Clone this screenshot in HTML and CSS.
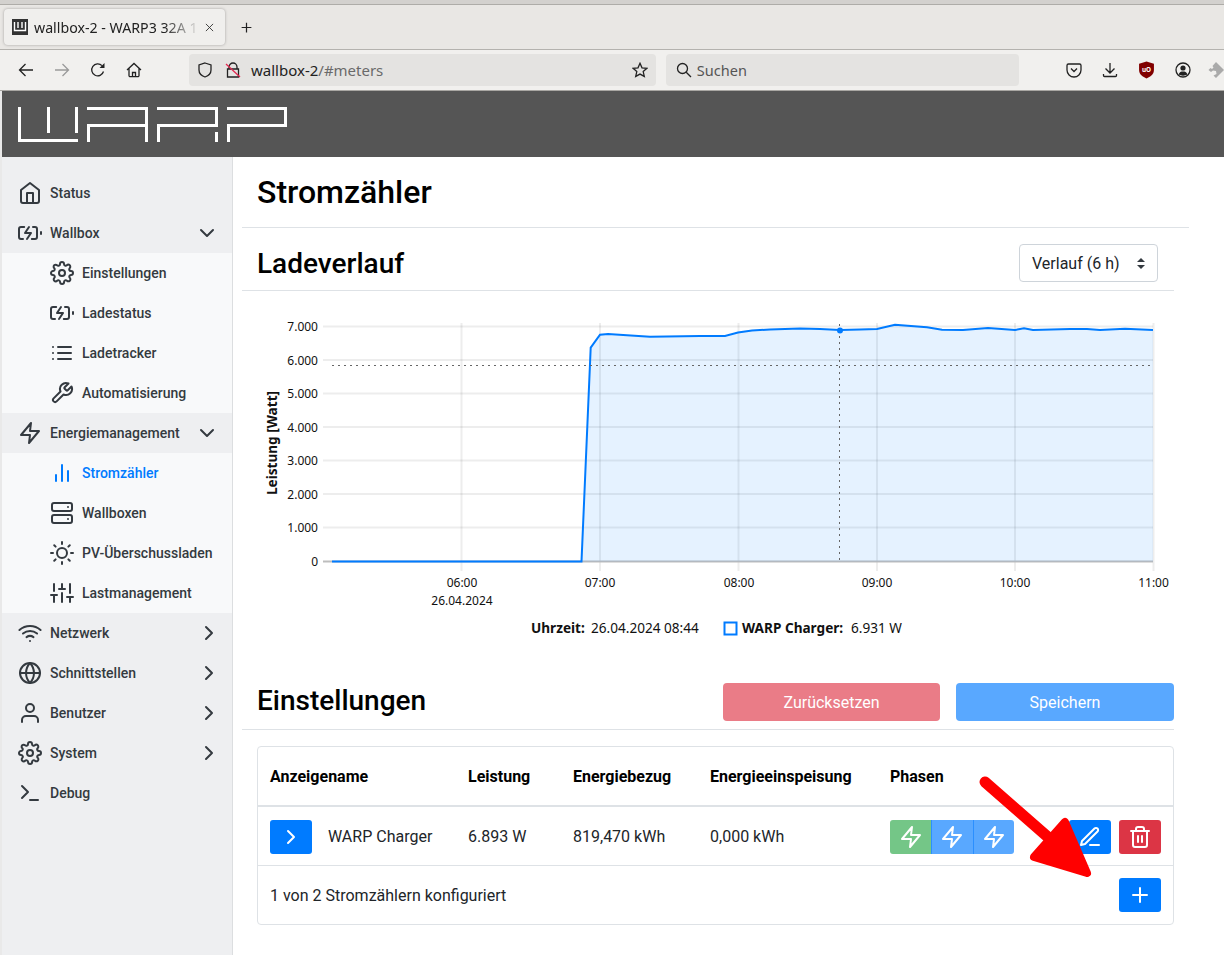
FILE: index.html
```html
<!DOCTYPE html>
<html lang="de">
<head>
  <meta charset="UTF-8" />
  <title>wallbox-2 - WARP3 32A</title>
  <link rel="stylesheet" href="styles.css">
</head>
<body>
  <!-- feather style icon set -->
  <svg class="sprite" xmlns="http://www.w3.org/2000/svg">
    <symbol id="i-home" viewBox="0 0 24 24"><path d="M3 9l9-7 9 7v11a2 2 0 0 1-2 2H5a2 2 0 0 1-2-2z"/><polyline points="9 22 9 12 15 12 15 22"/></symbol>
    <symbol id="i-battery" viewBox="0 0 24 24"><path d="M5 18H3a2 2 0 0 1-2-2V8a2 2 0 0 1 2-2h3.19M15 6h2a2 2 0 0 1 2 2v8a2 2 0 0 1-2 2h-3.19"/><line x1="23" y1="13" x2="23" y2="11"/><polyline points="11 6 7 12 13 12 9 18"/></symbol>
    <symbol id="i-settings" viewBox="0 0 24 24"><circle cx="12" cy="12" r="3"/><path d="M19.4 15a1.65 1.65 0 0 0 .33 1.82l.06.06a2 2 0 0 1 0 2.83 2 2 0 0 1-2.83 0l-.06-.06a1.65 1.65 0 0 0-1.82-.33 1.65 1.65 0 0 0-1 1.51V21a2 2 0 0 1-2 2 2 2 0 0 1-2-2v-.09A1.65 1.65 0 0 0 9 19.4a1.65 1.65 0 0 0-1.82.33l-.06.06a2 2 0 0 1-2.83 0 2 2 0 0 1 0-2.83l.06-.06a1.65 1.65 0 0 0 .33-1.82 1.65 1.65 0 0 0-1.51-1H3a2 2 0 0 1-2-2 2 2 0 0 1 2-2h.09A1.65 1.65 0 0 0 4.6 9a1.65 1.65 0 0 0-.33-1.82l-.06-.06a2 2 0 0 1 0-2.83 2 2 0 0 1 2.83 0l.06.06a1.65 1.65 0 0 0 1.82.33H9a1.65 1.65 0 0 0 1-1.51V3a2 2 0 0 1 2-2 2 2 0 0 1 2 2v.09a1.65 1.65 0 0 0 1 1.51 1.65 1.65 0 0 0 1.82-.33l.06-.06a2 2 0 0 1 2.83 0 2 2 0 0 1 0 2.83l-.06.06a1.65 1.65 0 0 0-.33 1.82V9a1.65 1.65 0 0 0 1.51 1H21a2 2 0 0 1 2 2 2 2 0 0 1-2 2h-.09a1.65 1.65 0 0 0-1.51 1z"/></symbol>
    <symbol id="i-list" viewBox="0 0 24 24"><line x1="8" y1="6" x2="21" y2="6"/><line x1="8" y1="12" x2="21" y2="12"/><line x1="8" y1="18" x2="21" y2="18"/><line x1="3" y1="6" x2="3.01" y2="6"/><line x1="3" y1="12" x2="3.01" y2="12"/><line x1="3" y1="18" x2="3.01" y2="18"/></symbol>
    <symbol id="i-tool" viewBox="0 0 24 24"><path d="M14.7 6.3a1 1 0 0 0 0 1.4l1.6 1.6a1 1 0 0 0 1.4 0l3.77-3.77a6 6 0 0 1-7.94 7.94l-6.91 6.91a2.12 2.12 0 0 1-3-3l6.91-6.91a6 6 0 0 1 7.94-7.94l-3.76 3.76z"/></symbol>
    <symbol id="i-zap" viewBox="0 0 24 24"><polygon points="13 2 3 14 12 14 11 22 21 10 12 10 13 2"/></symbol>
    <symbol id="i-bars" viewBox="0 0 24 24"><line x1="18" y1="20" x2="18" y2="10"/><line x1="12" y1="20" x2="12" y2="4"/><line x1="6" y1="20" x2="6" y2="14"/></symbol>
    <symbol id="i-server" viewBox="0 0 24 24"><rect x="2" y="2" width="20" height="8" rx="2" ry="2"/><rect x="2" y="14" width="20" height="8" rx="2" ry="2"/><line x1="18" y1="6" x2="18.01" y2="6"/><line x1="18" y1="18" x2="18.01" y2="18"/></symbol>
    <symbol id="i-sun" viewBox="0 0 24 24"><circle cx="12" cy="12" r="5"/><line x1="12" y1="1" x2="12" y2="3"/><line x1="12" y1="21" x2="12" y2="23"/><line x1="4.22" y1="4.22" x2="5.64" y2="5.64"/><line x1="18.36" y1="18.36" x2="19.78" y2="19.78"/><line x1="1" y1="12" x2="3" y2="12"/><line x1="21" y1="12" x2="23" y2="12"/><line x1="4.22" y1="19.78" x2="5.64" y2="18.36"/><line x1="18.36" y1="5.64" x2="19.78" y2="4.22"/></symbol>
    <symbol id="i-sliders" viewBox="0 0 24 24"><line x1="4" y1="21" x2="4" y2="14"/><line x1="4" y1="10" x2="4" y2="3"/><line x1="12" y1="21" x2="12" y2="12"/><line x1="12" y1="8" x2="12" y2="3"/><line x1="20" y1="21" x2="20" y2="16"/><line x1="20" y1="12" x2="20" y2="3"/><line x1="1" y1="14" x2="7" y2="14"/><line x1="9" y1="8" x2="15" y2="8"/><line x1="17" y1="16" x2="23" y2="16"/></symbol>
    <symbol id="i-wifi" viewBox="0 0 24 24"><path d="M5 12.55a11 11 0 0 1 14.08 0"/><path d="M1.42 9a16 16 0 0 1 21.16 0"/><path d="M8.53 16.11a6 6 0 0 1 6.95 0"/><line x1="12" y1="20" x2="12.01" y2="20"/></symbol>
    <symbol id="i-globe" viewBox="0 0 24 24"><circle cx="12" cy="12" r="10"/><line x1="2" y1="12" x2="22" y2="12"/><path d="M12 2a15.3 15.3 0 0 1 4 10 15.3 15.3 0 0 1-4 10 15.3 15.3 0 0 1-4-10 15.3 15.3 0 0 1 4-10z"/></symbol>
    <symbol id="i-user" viewBox="0 0 24 24"><path d="M20 21v-2a4 4 0 0 0-4-4H8a4 4 0 0 0-4 4v2"/><circle cx="12" cy="7" r="4"/></symbol>
    <symbol id="i-terminal" viewBox="0 0 24 24"><polyline points="4 17 10 11 4 5"/><line x1="12" y1="19" x2="20" y2="19"/></symbol>
    <symbol id="i-down" viewBox="0 0 24 24"><polyline points="6 9 12 15 18 9"/></symbol>
    <symbol id="i-right" viewBox="0 0 24 24"><polyline points="9 18 15 12 9 6"/></symbol>
    <symbol id="i-edit" viewBox="0 0 24 24"><path d="M12 20h9"/><path d="M16.5 3.5a2.121 2.121 0 0 1 3 3L7 19l-4 1 1-4L16.5 3.5z"/></symbol>
    <symbol id="i-trash" viewBox="0 0 24 24"><polyline points="3 6 5 6 21 6"/><path d="M19 6v14a2 2 0 0 1-2 2H7a2 2 0 0 1-2-2V6m3 0V4a2 2 0 0 1 2-2h4a2 2 0 0 1 2 2v2"/><line x1="10" y1="11" x2="10" y2="17"/><line x1="14" y1="11" x2="14" y2="17"/></symbol>
    <symbol id="i-plus" viewBox="0 0 24 24"><line x1="12" y1="5" x2="12" y2="19"/><line x1="5" y1="12" x2="19" y2="12"/></symbol>
  </svg>

  <!-- browser frame -->
  <div class="top-strip"></div>
  <div class="tabbar">
    <div class="tab">
      <svg class="favicon" viewBox="0 0 16 16"><rect width="16" height="16" fill="#333"/><path d="M2.5 3v8.5h11V3M6 3v6M10 3v6" fill="none" stroke="#fff" stroke-width="1.4"/></svg>
      <span class="tab-title">wallbox-2 - WARP3 32A 1</span>
      <svg class="tab-close" viewBox="0 0 10 10"><path d="M1 1l8 8M9 1l-8 8"/></svg>
    </div>
    <svg class="new-tab" viewBox="0 0 16 16"><path d="M8 2v12M2 8h12"/></svg>
  </div>
  <div class="toolbar">
    <svg class="tb-icon" viewBox="0 0 16 16"><path d="M15 8H1.5M7.5 2L1.5 8l6 6"/></svg>
    <svg class="tb-icon is-off" viewBox="0 0 16 16"><path d="M1 8h13.5M8.5 2l6 6-6 6"/></svg>
    <svg class="tb-icon" viewBox="0 0 16 16"><path d="M13.5 9.5A6 6 0 1 1 12 3.6"/><path class="solid" d="M14.5 1v5h-5z"/></svg>
    <svg class="tb-icon" viewBox="0 0 16 16"><path d="M1 8l7-6.5L15 8M3 6.5v7a1.2 1.2 0 0 0 1.2 1.2h7.6a1.2 1.2 0 0 0 1.2-1.2v-7M6.5 14.5v-4h3v4"/></svg>
    <div class="urlbar">
      <svg class="tb-icon shield" viewBox="0 0 16 16"><path d="M8 1l6 2v5c0 3.5-3 6-6 7-3-1-6-3.500-6-7V3z"/></svg>
      <svg class="tb-icon lock" viewBox="0 0 16 16"><path d="M4 7V5a4 4 0 0 1 8 0v2M2.500 7h11v8h-11z"/><path class="slash" d="M1 2l14 13"/></svg>
      <span class="url"><span class="url-host">wallbox-2</span>/#meters</span>
      <svg class="tb-icon star" viewBox="0 0 16 16"><path d="M8 1.300l2 4.500 4.900.5-3.700 3.300 1.100 4.800L8 12.100l-4.300 2.300 1.100-4.800-3.700-3.300 4.900-.5z"/></svg>
    </div>
    <div class="searchbar">
      <svg class="tb-icon" viewBox="0 0 16 16"><circle cx="6.500" cy="6.500" r="5"/><path d="M10.200 10.200L15 15"/></svg>
      <span>Suchen</span>
    </div>
    <div class="tb-right">
      <svg class="tb-icon" viewBox="0 0 16 16"><path d="M2.500 2h11A1.500 1.500 0 0 1 15 3.500V8a7 7 0 0 1-14 0V3.500A1.500 1.500 0 0 1 2.500 2z"/><path d="M5 6.500l3 3 3-3"/></svg>
      <svg class="tb-icon" viewBox="0 0 16 16"><path d="M8 1v10M3.500 6.500L8 11l4.500-4.500M1.500 12v1.500a1 1 0 0 0 1 1h11a1 1 0 0 0 1-1V12"/></svg>
      <svg class="tb-icon ublock" viewBox="0 0 16 16"><path class="solid" d="M8 0l7 2v6c0 4-3.500 6.500-7 8-3.500-1.500-7-4-7-8V2z"/><text x="8" y="9.500" text-anchor="middle">uO</text></svg>
      <svg class="tb-icon" viewBox="0 0 16 16"><circle cx="8" cy="8" r="7"/><circle class="solid" cx="8" cy="6" r="2.600"/><path class="solid" d="M3.500 12.500c1-2.500 2.500-3 4.500-3s3.500.5 4.500 3c-2.500 1.500-6.500 1.500-9 0z"/></svg>
      <svg class="ext" viewBox="0 0 16 16"><path d="M8 0l8 8-8 8-2.500-2.500 3-1.500-.5-3-3-.5L3 10 .5 8l2-2 1.500 1 1.500-1.500L4.500 4z"/></svg>
    </div>
  </div>

  <!-- WARP web interface -->
  <div class="page">
    <header class="brand">
      <svg class="logo" viewBox="18 106 270 37">
        <path d="M19.500 107v33.500H78M48.500 107v26M76.500 107v26"/>
        <path d="M88.500 142v-16.500h58M87 108.500h59.500V142"/>
        <path d="M158.500 142v-16.500h58V108.500H157M216.500 132v10"/>
        <path d="M228.500 142v-16.500h57V108.500H227"/>
      </svg>
    </header>

    <div class="layout">
      <nav class="sidebar">
        <a class="nav-item"><svg class="icon"><use href="#i-home"/></svg>Status</a>
        <a class="nav-item"><svg class="icon"><use href="#i-battery"/></svg>Wallbox<svg class="icon caret"><use href="#i-down"/></svg></a>
        <div class="sub-nav">
          <a class="nav-item"><svg class="icon"><use href="#i-settings"/></svg>Einstellungen</a>
          <a class="nav-item"><svg class="icon"><use href="#i-battery"/></svg>Ladestatus</a>
          <a class="nav-item"><svg class="icon"><use href="#i-list"/></svg>Ladetracker</a>
          <a class="nav-item"><svg class="icon"><use href="#i-tool"/></svg>Automatisierung</a>
        </div>
        <a class="nav-item"><svg class="icon"><use href="#i-zap"/></svg>Energiemanagement<svg class="icon caret"><use href="#i-down"/></svg></a>
        <div class="sub-nav">
          <a class="nav-item active"><svg class="icon"><use href="#i-bars"/></svg>Stromzähler</a>
          <a class="nav-item"><svg class="icon"><use href="#i-server"/></svg>Wallboxen</a>
          <a class="nav-item"><svg class="icon"><use href="#i-sun"/></svg>PV-Überschussladen</a>
          <a class="nav-item"><svg class="icon"><use href="#i-sliders"/></svg>Lastmanagement</a>
        </div>
        <a class="nav-item"><svg class="icon"><use href="#i-wifi"/></svg>Netzwerk<svg class="icon caret caret-right"><use href="#i-right"/></svg></a>
        <a class="nav-item"><svg class="icon"><use href="#i-globe"/></svg>Schnittstellen<svg class="icon caret caret-right"><use href="#i-right"/></svg></a>
        <a class="nav-item"><svg class="icon"><use href="#i-user"/></svg>Benutzer<svg class="icon caret caret-right"><use href="#i-right"/></svg></a>
        <a class="nav-item"><svg class="icon"><use href="#i-settings"/></svg>System<svg class="icon caret caret-right"><use href="#i-right"/></svg></a>
        <a class="nav-item"><svg class="icon"><use href="#i-terminal"/></svg>Debug</a>
      </nav>

      <main class="content">
        <div class="page-title"><h1>Stromzähler</h1></div>

        <div class="section-head chart-head">
          <h2>Ladeverlauf</h2>
          <div class="select">Verlauf (6 h)
            <svg class="select-arrows" viewBox="0 0 8 11"><path d="M4 0L8 4H0zM4 11L0 7h8z"/></svg>
          </div>
        </div>

        <!-- chart: viewBox uses window coordinates -->
        <svg class="chart" viewBox="242 291 932 370">
          <g class="grid">
            <line x1="323" y1="326.500" x2="1153" y2="326.500"/>
            <line x1="323" y1="360" x2="1153" y2="360"/>
            <line x1="323" y1="393.500" x2="1153" y2="393.500"/>
            <line x1="323" y1="427" x2="1153" y2="427"/>
            <line x1="323" y1="460.500" x2="1153" y2="460.500"/>
            <line x1="323" y1="494" x2="1153" y2="494"/>
            <line x1="323" y1="527.500" x2="1153" y2="527.500"/>
            <line x1="461.500" y1="323" x2="461.500" y2="571"/>
            <line x1="600" y1="323" x2="600" y2="571"/>
            <line x1="738.500" y1="323" x2="738.500" y2="571"/>
            <line x1="877" y1="323" x2="877" y2="571"/>
            <line x1="1015" y1="323" x2="1015" y2="571"/>
            <line x1="1153.500" y1="323" x2="1153.500" y2="571"/>
          </g>
          <line class="axis" x1="323" y1="561.500" x2="1153" y2="561.500"/>
          <polygon class="area" points="332,561.500 581.500,561.500 590.700,347.700 600,334.700 608,334 627,335.300 650,336.700 700,336 725,336 738,332.500 752,330.500 770,329.500 800,328.500 820,329 840,330 860,329.500 877,329 895,324.700 927,327.300 942,329.700 963,330 988,328 1015,330 1024,328.300 1033,330 1070,329 1087,329 1100,330 1125,328.700 1153,330 1153,561.500"/>
          <polyline class="series" points="332,561.500 581.500,561.500 590.700,347.700 600,334.700 608,334 627,335.300 650,336.700 700,336 725,336 738,332.500 752,330.500 770,329.500 800,328.500 820,329 840,330 860,329.500 877,329 895,324.700 927,327.300 942,329.700 963,330 988,328 1015,330 1024,328.300 1033,330 1070,329 1087,329 1100,330 1125,328.700 1153,330"/>
          <line class="cursor" x1="332" y1="365.500" x2="1153" y2="365.500"/>
          <line class="cursor" x1="839.500" y1="324" x2="839.500" y2="561"/>
          <circle class="point" cx="840" cy="330.500" r="3"/>

          <g class="y-labels">
            <text x="318" y="331">7.000</text>
            <text x="318" y="365">6.000</text>
            <text x="318" y="398">5.000</text>
            <text x="318" y="432">4.000</text>
            <text x="318" y="465">3.000</text>
            <text x="318" y="499">2.000</text>
            <text x="318" y="532">1.000</text>
            <text x="318" y="566">0</text>
          </g>
          <g class="x-labels">
            <text x="462" y="587">06:00</text>
            <text x="462" y="605">26.04.2024</text>
            <text x="600" y="587">07:00</text>
            <text x="739" y="587">08:00</text>
            <text x="877" y="587">09:00</text>
            <text x="1015" y="587">10:00</text>
            <text x="1153.500" y="587">11:00</text>
          </g>
          <text class="y-title" transform="translate(277 443) rotate(-90)">Leistung [Watt]</text>

          <text class="legend-key" x="531" y="633">Uhrzeit:</text>
          <text class="legend-val" x="591" y="633">26.04.2024 08:44</text>
          <rect class="legend-box" x="724.500" y="622.500" width="12" height="12"/>
          <text class="legend-key" x="742" y="633">WARP Charger:</text>
          <text class="legend-val" x="851" y="633">6.931 W</text>
        </svg>

        <div class="section-head settings-head">
          <h2>Einstellungen</h2>
          <div class="head-actions">
            <button class="btn btn-danger-off">Zurücksetzen</button>
            <button class="btn btn-primary-off">Speichern</button>
          </div>
        </div>

        <div class="table-card">
          <table class="meters">
            <colgroup>
              <col class="col-name"><col class="col-power"><col class="col-import"><col class="col-export"><col>
            </colgroup>
            <thead>
              <tr>
                <th>Anzeigename</th>
                <th>Leistung</th>
                <th>Energiebezug</th>
                <th>Energieeinspeisung</th>
                <th>Phasen</th>
              </tr>
            </thead>
            <tbody>
              <tr>
                <td>
                  <div class="name-cell">
                    <button class="icon-btn blue"><svg class="icon"><use href="#i-right"/></svg></button>
                    WARP Charger
                  </div>
                </td>
                <td>6.893 W</td>
                <td>819,470 kWh</td>
                <td>0,000 kWh</td>
                <td>
                  <div class="row-actions">
                    <div class="phases">
                      <span class="phase on"><svg class="icon"><use href="#i-zap"/></svg></span>
                      <span class="phase"><svg class="icon"><use href="#i-zap"/></svg></span>
                      <span class="phase"><svg class="icon"><use href="#i-zap"/></svg></span>
                    </div>
                    <button class="icon-btn blue"><svg class="icon"><use href="#i-edit"/></svg></button>
                    <button class="icon-btn red"><svg class="icon"><use href="#i-trash"/></svg></button>
                  </div>
                </td>
              </tr>
            </tbody>
            <tfoot>
              <tr>
                <td colspan="5">
                  <div class="foot-row">
                    1 von 2 Stromzählern konfiguriert
                    <button class="icon-btn blue"><svg class="icon"><use href="#i-plus"/></svg></button>
                  </div>
                </td>
              </tr>
            </tfoot>
          </table>
        </div>
      </main>
    </div>
  </div>

  <!-- red arrow drawn over the screenshot -->
  <svg class="annotation" viewBox="0 0 1224 955">
    <line x1="985" y1="782" x2="1065" y2="852"/>
    <polygon points="1065,822 1087,873 1034,857"/>
  </svg>
</body>
</html>
```

FILE: styles.css
```css
/* Base */
* {
  box-sizing: border-box;
}
html, body {
  margin: 0;
  height: 955px;
  overflow: hidden;
}
body {
  display: flex;
  flex-direction: column;
  font-family: Roboto, "Liberation Sans", sans-serif;
  color: #212529;
  background-color: #e9e9e9;
}
.sprite {
  display: none;
}
.icon {
  width: 24px;
  height: 24px;
  flex: none;
  fill: none;
  stroke: currentColor;
  stroke-width: 2;
  stroke-linecap: round;
  stroke-linejoin: round;
}

/* Browser frame */
.top-strip {
  height: 5px;
  background-color: #d3d1ce;
  border-bottom: 1px solid #aeaca8;
}
.tabbar {
  height: 45px;
  display: flex;
  align-items: center;
  padding-left: 4px;
  background-color: #e9e7e4;
  border-bottom: 1px solid #b4b2ae;
}
.tab {
  width: 221px;
  height: 36px;
  display: flex;
  align-items: center;
  padding-left: 8px;
  background-color: #f0efed;
  border-radius: 4px;
  box-shadow: 0 0 3px rgba(0, 0, 0, .3);
  font-family: "Noto Sans", sans-serif;
  font-size: 14.200px;
  color: #222;
}
.favicon {
  width: 16px;
  height: 16px;
  flex: none;
  margin-right: 6px;
}
.tab-title {
  width: 166px;
  overflow: hidden;
  white-space: nowrap;
  -webkit-mask-image: linear-gradient(to right, #000 78%, rgba(0, 0, 0, .15) 97%);
  mask-image: linear-gradient(to right, #000 78%, rgba(0, 0, 0, .15) 97%);
}
.tab-close {
  width: 9px;
  height: 9px;
  margin-left: 5px;
  fill: none;
  stroke: #333;
  stroke-width: 1;
}
.new-tab {
  width: 13px;
  height: 13px;
  margin-left: 15px;
  fill: none;
  stroke: #222;
  stroke-width: 1.500;
}
.toolbar {
  height: 41px;
  display: flex;
  align-items: center;
  padding-left: 18px;
  background-color: #f1f0ee;
  border-bottom: 1px solid #a9a7a3;
  overflow: hidden;
  font-family: "Noto Sans", sans-serif;
  font-size: 14.500px;
}
.tb-icon {
  width: 16px;
  height: 16px;
  flex: none;
  margin-right: 20px;
  fill: none;
  stroke: #222;
  stroke-width: 1.300;
}
.tb-icon .solid {
  fill: #222;
  stroke: none;
}
.tb-icon.is-off {
  stroke: #9a9a9a;
}
.urlbar {
  width: 468px;
  height: 32px;
  display: flex;
  align-items: center;
  margin-left: 27px;
  padding-left: 8px;
  background-color: #e4e3e1;
  border-radius: 4px;
  color: #6a6a6a;
}
.urlbar .tb-icon {
  margin-right: 0;
}
.urlbar .lock {
  margin-left: 12px;
}
.slash {
  stroke: #e22850;
}
.url {
  margin-left: 10px;
  font-size: 15px;
}
.url-host {
  color: #222;
}
.urlbar .star {
  margin-left: auto;
  margin-right: 8px;
}
.searchbar {
  width: 354px;
  height: 32px;
  display: flex;
  align-items: center;
  margin-left: 10px;
  padding-left: 10px;
  background-color: #e4e3e1;
  border-radius: 4px;
  color: #555;
}
.searchbar .tb-icon {
  margin-right: 5px;
}
.tb-right {
  display: flex;
  align-items: center;
  gap: 20px;
  margin-left: 47px;
}
.tb-right .tb-icon {
  margin-right: 0;
}
.tb-right .ublock {
  width: 17px;
  height: 18px;
}
.ublock .solid {
  fill: #800000;
}
.ublock text {
  font-size: 6px;
  font-weight: 700;
  fill: #fff;
  stroke: none;
  font-family: "Noto Sans", sans-serif;
}
.ext {
  width: 16px;
  height: 16px;
  flex: none;
  margin-left: -3px;
  fill: #aaa;
}

/* WARP page */
.page {
  flex: 1;
  display: flex;
  flex-direction: column;
  margin-left: 2px;
  min-height: 0;
}
.brand {
  height: 66px;
  flex: none;
  padding: 15px 0 0 16px;
  background-color: #555;
}
.logo {
  display: block;
  width: 270px;
  height: 37px;
  fill: none;
  stroke: #fff;
  stroke-width: 3;
}
.layout {
  flex: 1;
  display: flex;
  min-height: 0;
}
.sidebar {
  width: 231px;
  flex: none;
  padding-top: 16px;
  background-color: #eeeff1;
  border-right: 1px solid #dcdee0;
}
.nav-item {
  height: 40px;
  display: flex;
  align-items: center;
  gap: 8px;
  padding: 0 13px 0 16px;
  font-size: 14px;
  font-weight: 500;
  color: #343a40;
}
.caret {
  margin-left: auto;
}
.caret-right {
  margin-right: -2px;
}
.sub-nav {
  background-color: #f8f9fa;
}
.sub-nav .nav-item {
  padding-left: 48px;
}
.nav-item.active {
  color: #007bff;
}

.content {
  flex: 1;
  min-width: 0;
  padding-left: 9px;
  background-color: #fff;
}
h1, h2 {
  margin: 0;
  font-weight: 500;
  line-height: 1.2;
  color: #000;
}
h1 {
  font-size: 32px;
}
h2 {
  font-size: 28px;
}
.page-title {
  width: 947px;
  height: 71px;
  display: flex;
  align-items: center;
  padding-left: 15px;
  border-bottom: 1px solid #dee2e6;
}
.section-head {
  width: 932px;
  display: flex;
  justify-content: space-between;
  padding-left: 15px;
  border-bottom: 1px solid #dee2e6;
}
.chart-head {
  height: 63px;
  align-items: center;
  padding: 16px 16px 8px 15px;
}
.chart-head h2 {
  margin-top: 2px;
}
.settings-head {
  height: 69px;
  align-items: flex-start;
  padding-top: 22px;
}
.settings-head h2 {
  margin-top: 1px;
}
.select {
  width: 139px;
  height: 38px;
  display: flex;
  align-items: center;
  padding-left: 12px;
  border: 1px solid #ced4da;
  border-radius: 4px;
  font-size: 16px;
  color: #212529;
}
.select-arrows {
  width: 8px;
  height: 11px;
  margin-left: auto;
  margin-right: 12px;
  fill: #343a40;
}

/* Chart */
.chart {
  display: block;
  width: 932px;
  height: 370px;
  font-family: "Noto Sans", sans-serif;
  font-size: 12px;
  fill: #111;
}
.grid line {
  stroke: rgba(0, 0, 0, .07);
  stroke-width: 2;
}
.axis {
  stroke: #bdbdbd;
  stroke-width: 2;
}
.area {
  fill: rgba(0, 123, 255, .1);
}
.series {
  fill: none;
  stroke: #007bff;
  stroke-width: 2;
}
.cursor {
  stroke: #666;
  stroke-width: 1;
  stroke-dasharray: 2 4;
}
.point {
  fill: #007bff;
}
.y-labels text {
  text-anchor: end;
}
.x-labels text {
  text-anchor: middle;
}
.y-title {
  text-anchor: middle;
  font-size: 13.600px;
  font-weight: 700;
}
.legend-key, .legend-val {
  font-size: 13.600px;
}
.legend-key {
  font-weight: 700;
}
.legend-box {
  fill: none;
  stroke: #007bff;
  stroke-width: 2;
}

/* Buttons */
.head-actions {
  display: flex;
  gap: 16px;
}
.btn {
  width: 218px;
  height: 38px;
  border: 0;
  border-radius: 4px;
  font-family: inherit;
  font-size: 16px;
  color: #fff;
}
.btn-danger-off {
  width: 217px;
  background-color: #ea7c87;
}
.btn-primary-off {
  background-color: #59a8ff;
}
.icon-btn {
  width: 42px;
  height: 34px;
  flex: none;
  display: flex;
  align-items: center;
  justify-content: center;
  padding: 0;
  border: 0;
  border-radius: 3px;
  color: #fff;
}
.icon-btn.blue {
  background-color: #007bff;
}
.icon-btn.red {
  background-color: #dc3545;
}

/* Table */
.table-card {
  width: 917px;
  height: 179px;
  margin: 16px 0 0 15px;
  border: 1px solid #dee2e6;
  border-radius: 4px;
  overflow: hidden;
}
.meters {
  width: 100%;
  table-layout: fixed;
  border-collapse: collapse;
  font-size: 16px;
}
.col-name {
  width: 198px;
}
.col-power {
  width: 105px;
}
.col-import {
  width: 137px;
}
.col-export {
  width: 180px;
}
.meters th, .meters td {
  padding: 0 12px;
  text-align: left;
  white-space: nowrap;
}
.meters th {
  height: 59px;
  font-weight: 700;
  color: #000;
  border-bottom: 2px solid #dee2e6;
}
.meters tbody td {
  height: 59px;
  padding-top: 2px;
  border-bottom: 1px solid #dee2e6;
}
.meters tfoot td {
  height: 58px;
  padding-top: 2px;
}
.name-cell {
  display: flex;
  align-items: center;
  gap: 16px;
}
.row-actions {
  display: flex;
  gap: 8px;
}
.phases {
  display: flex;
  margin-right: 47px;
}
.phase {
  width: 41.300px;
  height: 34px;
  display: flex;
  align-items: center;
  justify-content: center;
  background-color: #59a8ff;
  border-left: 1px solid #2b8fff;
  color: #fff;
}
.phase.on {
  background-color: #74c687;
  border-left: 0;
  border-radius: 3px 0 0 3px;
}
.phase:last-child {
  border-radius: 0 3px 3px 0;
}
.foot-row {
  display: flex;
  align-items: center;
  justify-content: space-between;
}

/* Annotation */
.annotation {
  position: absolute;
  left: 0;
  top: 0;
  width: 1224px;
  height: 955px;
  pointer-events: none;
  fill: #f00;
  stroke: #f00;
  stroke-linecap: round;
  stroke-linejoin: round;
}
.annotation line {
  stroke-width: 11;
}
.annotation polygon {
  stroke-width: 8;
}
```
